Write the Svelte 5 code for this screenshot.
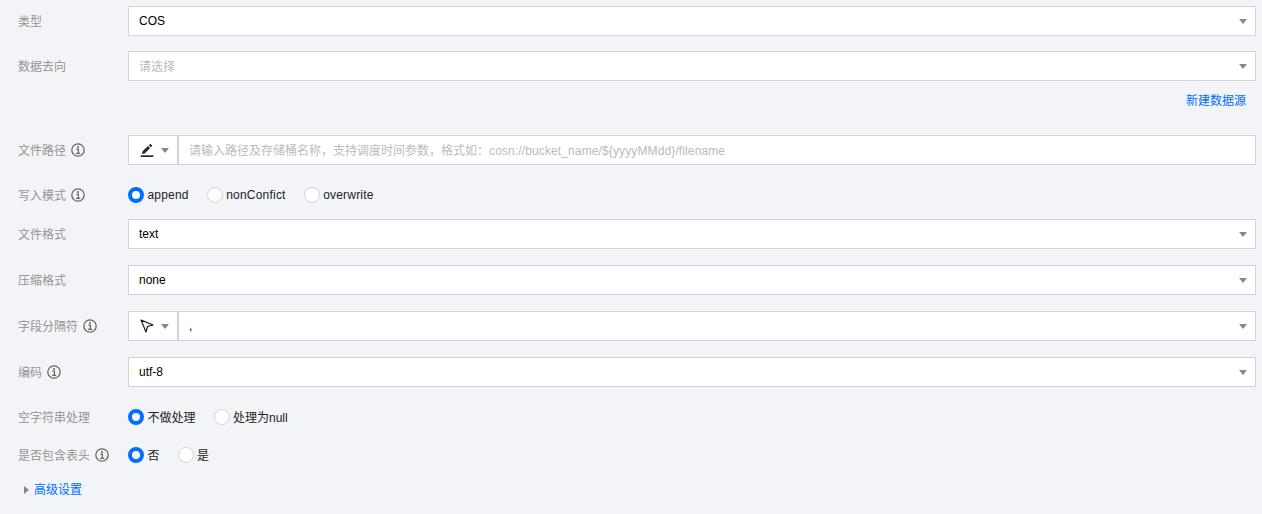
<script>
	const pathHint = '请输入路径及存储桶名称，支持调度时间参数，格式如：';
	const pathHintEn = 'cosn://bucket_name/${yyyyMMdd}/filename';
	const writeModes = ['append', 'nonConfict', 'overwrite'];
	const nullModes = ['不做处理', '处理为null'];
	const headerModes = ['否', '是'];
</script>

{#snippet info()}
	<svg class="info" viewBox="0 0 14 14" width="14" height="14">
		<circle cx="7" cy="7" r="6.2" fill="none" stroke="#666" stroke-width="1.3" />
		<circle cx="7" cy="4" r="1" fill="#666" />
		<path d="M5.4 6.1h2v3.9M5 10.3h4.2" fill="none" stroke="#666" stroke-width="1.2" />
	</svg>
{/snippet}

{#snippet arrow()}
	<span class="arrow"></span>
{/snippet}

{#snippet radios(items, cjk)}
	<div class="radios" class:cjk>
		{#each items as item, i}
			<span class="radio-item">
				<span class="radio" class:checked={i === 0}></span>
				<span class="radio-text">{item}</span>
			</span>
		{/each}
	</div>
{/snippet}

<div class="form">
	<div class="row r-type">
		<div class="label">类型</div>
		<div class="select"><span>COS</span>{@render arrow()}</div>
	</div>
	<div class="row r-target">
		<div class="label">数据去向</div>
		<div class="select"><span class="placeholder">请选择</span>{@render arrow()}</div>
	</div>
	<div class="link-row"><span class="link">新建数据源</span></div>
	<div class="row r-path">
		<div class="label">文件路径 {@render info()}</div>
		<div class="group">
			<div class="addon">
				<svg viewBox="0 0 14 14" width="14" height="14">
					<path d="M.7 12.3h12.6V14H.7z" fill="#1e2a3a" />
					<path d="M2 11l.6-2.7L8 3l2.1 2.1-5.4 5.3zM8.8 2.2L10.3.7l2.1 2.1-1.5 1.5z" fill="#1e2a3a" />
				</svg>
				{@render arrow()}
			</div>
			<div class="select main"><span class="placeholder">{pathHint}<span class="latin">{pathHintEn}</span></span></div>
		</div>
	</div>
	<div class="row r-radio-write">
		<div class="label">写入模式 {@render info()}</div>
		{@render radios(writeModes, false)}
	</div>
	<div class="row r-format">
		<div class="label">文件格式</div>
		<div class="select"><span>text</span>{@render arrow()}</div>
	</div>
	<div class="row r-next">
		<div class="label">压缩格式</div>
		<div class="select"><span>none</span>{@render arrow()}</div>
	</div>
	<div class="row r-next">
		<div class="label">字段分隔符 {@render info()}</div>
		<div class="group">
			<div class="addon">
				<svg viewBox="0 0 14 14" width="14" height="14">
					<path d="M1 1l12 5-5.5 1.5L6 13z" fill="none" stroke="#111" stroke-width="1.1" stroke-linejoin="round" />
				</svg>
				{@render arrow()}
			</div>
			<div class="select main"><span>,</span>{@render arrow()}</div>
		</div>
	</div>
	<div class="row r-next">
		<div class="label">编码 {@render info()}</div>
		<div class="select"><span>utf-8</span>{@render arrow()}</div>
	</div>
	<div class="row r-radio-null">
		<div class="label">空字符串处理</div>
		{@render radios(nullModes, true)}
	</div>
	<div class="row r-radio-header">
		<div class="label">是否包含表头 {@render info()}</div>
		{@render radios(headerModes, true)}
	</div>
	<div class="advanced">
		<span class="tri"></span>
		<span class="link">高级设置</span>
	</div>
</div>

<style>
	:global(body) {
		background: #f2f4f8;
	}
	.form {
		width: 1262px;
		height: 514px;
		box-sizing: border-box;
		padding: 6px 6px 0 18px;
		font-family: 'Liberation Sans', 'Noto Sans CJK SC', sans-serif;
		font-size: 12px;
		color: #000;
		overflow: hidden;
	}
	.row {
		display: flex;
		align-items: center;
		height: 30px;
	}
	.r-target {
		margin-top: 15px;
	}
	.link-row {
		display: flex;
		justify-content: flex-end;
		height: 54px;
		padding: 12px 10px 0 0;
		box-sizing: border-box;
		line-height: 16px;
	}
	.r-radio-write {
		margin-top: 15px;
	}
	.r-format {
		margin-top: 9px;
	}
	.r-next {
		margin-top: 16px;
	}
	.r-radio-null {
		margin-top: 15px;
	}
	.r-radio-header {
		margin-top: 8px;
	}
	.label {
		width: 110px;
		flex: none;
		display: flex;
		align-items: center;
		gap: 5px;
		color: #959595;
		padding-bottom: 2px;
		box-sizing: border-box;
	}
	.label .info {
		margin-top: 2px;
	}
	.select {
		flex: 1;
		height: 30px;
		box-sizing: border-box;
		display: flex;
		align-items: center;
		justify-content: space-between;
		padding: 0 8px 0 10px;
		background: #fff;
		border: 1px solid #cfd5de;
	}
	.placeholder {
		color: #bbb;
		padding-bottom: 2px;
	}
	.latin {
		letter-spacing: 0.12px;
	}
	.group {
		flex: 1;
		display: flex;
	}
	.addon {
		width: 49px;
		height: 30px;
		box-sizing: border-box;
		display: flex;
		align-items: center;
		gap: 7px;
		padding-left: 11px;
		background: #fff;
		border: 1px solid #cfd5de;
		border-right: none;
	}
	.main {
		border-left: 2px solid #cfd5de;
		padding-left: 10px;
	}
	.arrow {
		width: 0;
		height: 0;
		border-left: 4px solid transparent;
		border-right: 4px solid transparent;
		border-top: 5px solid #888;
	}
	.link {
		color: #006eff;
	}
	.radios {
		display: flex;
		gap: 18px;
	}
	.radio-item {
		display: flex;
		align-items: center;
		gap: 3.5px;
		color: #222;
	}
	.radio-text {
		letter-spacing: 0.2px;
	}
	.cjk .radio-text {
		letter-spacing: 0;
		padding-bottom: 2px;
	}
	.radio {
		width: 16px;
		height: 16px;
		box-sizing: border-box;
		border: 1px solid #cfd5de;
		border-radius: 50%;
		background: #fff;
	}
	.radio.checked {
		border: 4px solid #006eff;
	}
	.advanced {
		display: flex;
		align-items: center;
		gap: 5px;
		margin: 12px 0 0 6px;
		line-height: 16px;
	}
	.tri {
		width: 0;
		height: 0;
		border-top: 4px solid transparent;
		border-bottom: 4px solid transparent;
		border-left: 5px solid #888;
	}
</style>
